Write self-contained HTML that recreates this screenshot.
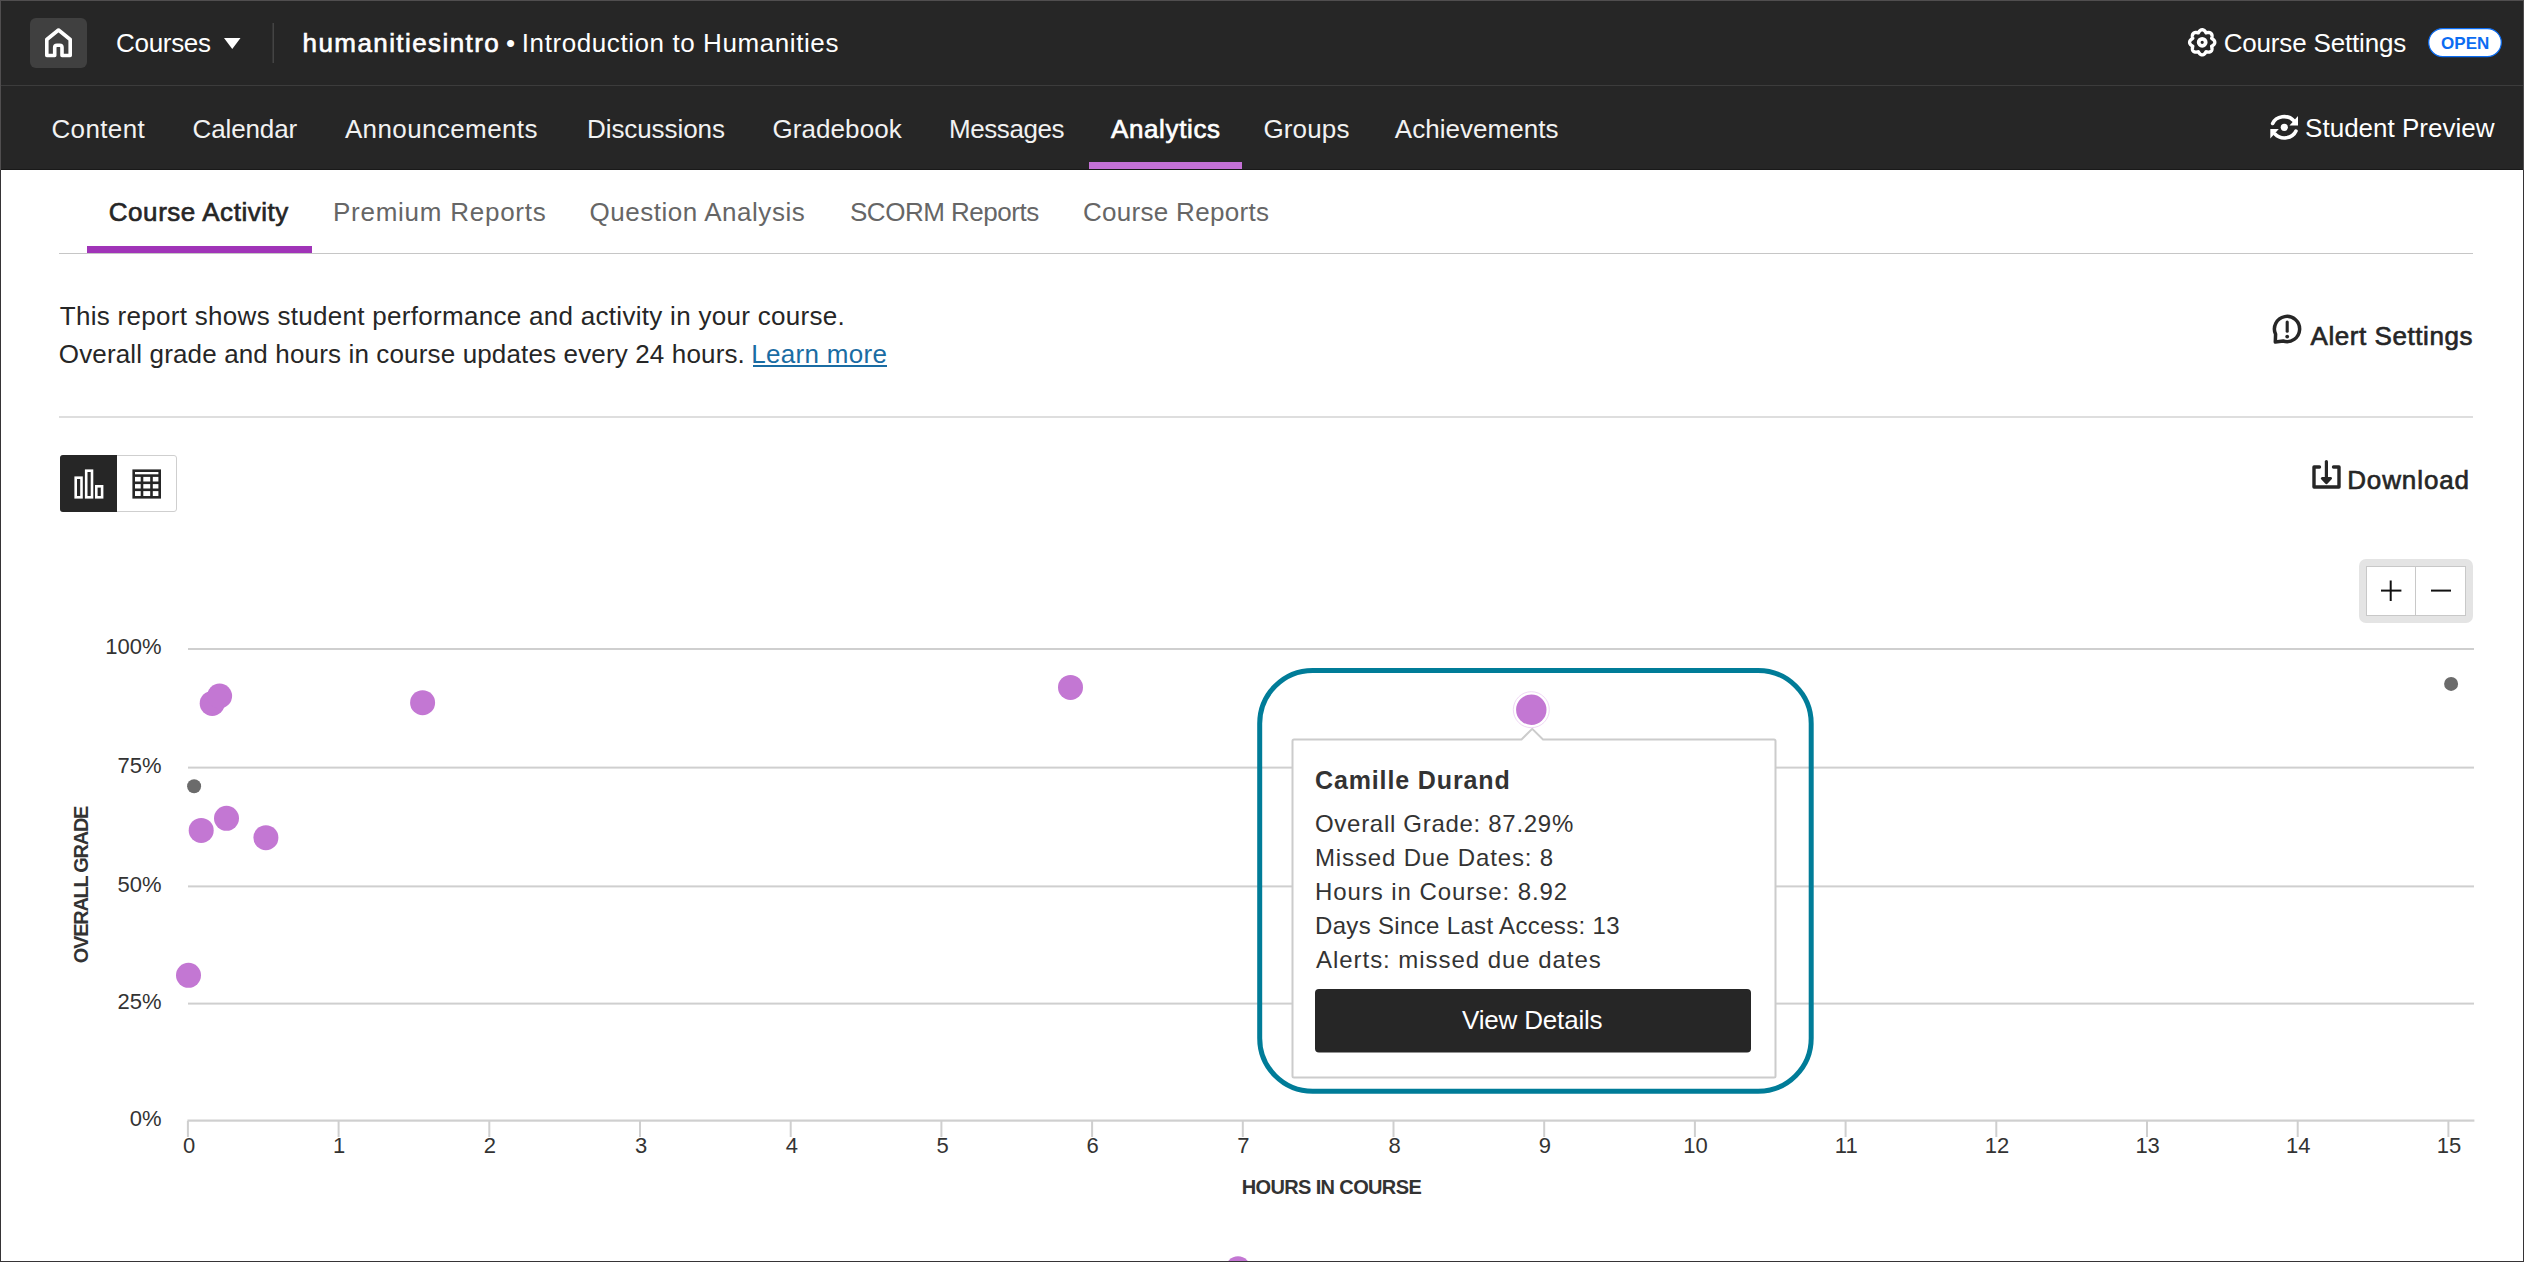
<!DOCTYPE html>
<html><head><meta charset="utf-8">
<style>
html,body{margin:0;padding:0;}
body{width:2524px;height:1262px;overflow:hidden;background:#fff;position:relative;font-family:"Liberation Sans",sans-serif;}
.a{position:absolute;}
.t{position:absolute;white-space:pre;font-family:"Liberation Sans",sans-serif;}
</style></head><body>
<!-- header -->
<div class="a" style="left:0;top:0;width:2524px;height:170px;background:#262626"></div>
<div class="a" style="left:0;top:85px;width:2524px;height:1px;background:#3c3c3c"></div>
<div class="a" style="left:0;top:169px;width:2524px;height:1px;background:#191919"></div>
<!-- home button -->
<div class="a" style="left:30px;top:18px;width:57px;height:50px;border-radius:6px;background:#404040"></div>
<svg class="a" style="left:0;top:0" width="2524" height="170" viewBox="0 0 2524 170">
  <!-- house -->
  <path d="M46.8 55.5 V39.5 L58.5 30 L70.2 39.5 V55.5 H62 V47.6 Q62 45.3 59.8 45.3 H57 Q54.7 45.3 54.7 47.6 V55.5 Z" fill="none" stroke="#fff" stroke-width="3.6" stroke-linejoin="round"/>
  <!-- triangle -->
  <path d="M224 38 H240.5 L232.25 49 Z" fill="#fff"/>
  <!-- separator -->
  <rect x="272.5" y="23" width="1.5" height="40" fill="#444"/>
  <!-- gear -->
  <g transform="translate(2202.2,42.3)">
    <path d="M0.00 -12.55 L0.33 -12.53 L0.65 -12.48 L0.97 -12.39 L1.29 -12.26 L1.59 -12.10 L1.89 -11.91 L2.17 -11.70 L2.43 -11.45 L2.69 -11.19 L2.92 -10.91 L3.15 -10.62 L3.35 -10.31 L3.54 -10.01 L3.73 -9.71 L3.90 -9.42 L4.23 -9.50 L4.57 -9.58 L4.92 -9.66 L5.28 -9.73 L5.65 -9.78 L6.01 -9.81 L6.38 -9.82 L6.74 -9.80 L7.09 -9.76 L7.43 -9.68 L7.76 -9.58 L8.07 -9.45 L8.36 -9.28 L8.63 -9.09 L8.87 -8.87 L9.09 -8.63 L9.28 -8.36 L9.45 -8.07 L9.58 -7.76 L9.68 -7.43 L9.76 -7.09 L9.80 -6.74 L9.82 -6.38 L9.81 -6.01 L9.78 -5.65 L9.73 -5.28 L9.66 -4.92 L9.58 -4.57 L9.50 -4.23 L9.42 -3.90 L9.71 -3.73 L10.01 -3.54 L10.31 -3.35 L10.62 -3.15 L10.91 -2.92 L11.19 -2.69 L11.45 -2.43 L11.70 -2.17 L11.91 -1.89 L12.10 -1.59 L12.26 -1.29 L12.39 -0.97 L12.48 -0.65 L12.53 -0.33 L12.55 -0.00 L12.53 0.33 L12.48 0.65 L12.39 0.97 L12.26 1.29 L12.10 1.59 L11.91 1.89 L11.70 2.17 L11.45 2.43 L11.19 2.69 L10.91 2.92 L10.62 3.15 L10.31 3.35 L10.01 3.54 L9.71 3.73 L9.42 3.90 L9.50 4.23 L9.58 4.57 L9.66 4.92 L9.73 5.28 L9.78 5.65 L9.81 6.01 L9.82 6.38 L9.80 6.74 L9.76 7.09 L9.68 7.43 L9.58 7.76 L9.45 8.07 L9.28 8.36 L9.09 8.63 L8.87 8.87 L8.63 9.09 L8.36 9.28 L8.07 9.45 L7.76 9.58 L7.43 9.68 L7.09 9.76 L6.74 9.80 L6.38 9.82 L6.01 9.81 L5.65 9.78 L5.28 9.73 L4.92 9.66 L4.57 9.58 L4.23 9.50 L3.90 9.42 L3.73 9.71 L3.54 10.01 L3.35 10.31 L3.15 10.62 L2.92 10.91 L2.69 11.19 L2.43 11.45 L2.17 11.70 L1.89 11.91 L1.59 12.10 L1.29 12.26 L0.97 12.39 L0.65 12.48 L0.33 12.53 L0.00 12.55 L-0.33 12.53 L-0.65 12.48 L-0.97 12.39 L-1.29 12.26 L-1.59 12.10 L-1.89 11.91 L-2.17 11.70 L-2.43 11.45 L-2.69 11.19 L-2.92 10.91 L-3.15 10.62 L-3.35 10.31 L-3.54 10.01 L-3.73 9.71 L-3.90 9.42 L-4.23 9.50 L-4.57 9.58 L-4.92 9.66 L-5.28 9.73 L-5.65 9.78 L-6.01 9.81 L-6.38 9.82 L-6.74 9.80 L-7.09 9.76 L-7.43 9.68 L-7.76 9.58 L-8.07 9.45 L-8.36 9.28 L-8.63 9.09 L-8.87 8.87 L-9.09 8.63 L-9.28 8.36 L-9.45 8.07 L-9.58 7.76 L-9.68 7.43 L-9.76 7.09 L-9.80 6.74 L-9.82 6.38 L-9.81 6.01 L-9.78 5.65 L-9.73 5.28 L-9.66 4.92 L-9.58 4.57 L-9.50 4.23 L-9.42 3.90 L-9.71 3.73 L-10.01 3.54 L-10.31 3.35 L-10.62 3.15 L-10.91 2.92 L-11.19 2.69 L-11.45 2.43 L-11.70 2.17 L-11.91 1.89 L-12.10 1.59 L-12.26 1.29 L-12.39 0.97 L-12.48 0.65 L-12.53 0.33 L-12.55 0.00 L-12.53 -0.33 L-12.48 -0.65 L-12.39 -0.97 L-12.26 -1.29 L-12.10 -1.59 L-11.91 -1.89 L-11.70 -2.17 L-11.45 -2.43 L-11.19 -2.69 L-10.91 -2.92 L-10.62 -3.15 L-10.31 -3.35 L-10.01 -3.54 L-9.71 -3.73 L-9.42 -3.90 L-9.50 -4.23 L-9.58 -4.57 L-9.66 -4.92 L-9.73 -5.28 L-9.78 -5.65 L-9.81 -6.01 L-9.82 -6.38 L-9.80 -6.74 L-9.76 -7.09 L-9.68 -7.43 L-9.58 -7.76 L-9.45 -8.07 L-9.28 -8.36 L-9.09 -8.63 L-8.87 -8.87 L-8.63 -9.09 L-8.36 -9.28 L-8.07 -9.45 L-7.76 -9.58 L-7.43 -9.68 L-7.09 -9.76 L-6.74 -9.80 L-6.38 -9.82 L-6.01 -9.81 L-5.65 -9.78 L-5.28 -9.73 L-4.92 -9.66 L-4.57 -9.58 L-4.23 -9.50 L-3.90 -9.42 L-3.73 -9.71 L-3.54 -10.01 L-3.35 -10.31 L-3.15 -10.62 L-2.92 -10.91 L-2.69 -11.19 L-2.43 -11.45 L-2.17 -11.70 L-1.89 -11.91 L-1.59 -12.10 L-1.29 -12.26 L-0.97 -12.39 L-0.65 -12.48 L-0.33 -12.53 Z" fill="none" stroke="#fff" stroke-width="3.4" stroke-linejoin="round"/>
    <circle cx="0" cy="0" r="3.5" fill="none" stroke="#fff" stroke-width="3.8"/>
  </g>
  <!-- OPEN pill -->
  <rect x="2428.7" y="28.6" width="72.6" height="28" rx="14" fill="#fff" stroke="#0b6cf2" stroke-width="1.2"/>
  <!-- refresh icon -->
  <g fill="none" stroke="#fff" stroke-width="3.6" stroke-linecap="round">
    <path d="M2272.65 123.5 A12.4 11 0 0 1 2293.6 120.5"/>
    <path d="M2295.95 131.06 A12.4 11 0 0 1 2275 134.1"/>
  </g>
  <path d="M2289.5 125.6 H2298 V116 Z" fill="#fff"/>
  <path d="M2270.3 129.1 H2278.8 L2270.3 138.6 Z" fill="#fff"/>
  <circle cx="2284.3" cy="127.3" r="3.6" fill="#fff"/>
  <!-- analytics underline -->
  <rect x="1089" y="162" width="153" height="7" fill="#c471d6"/>
</svg>
<!-- subtabs -->
<div class="a" style="left:59px;top:253px;width:2414px;height:1px;background:#c6c6c6"></div>
<div class="a" style="left:87px;top:246px;width:225px;height:7px;background:#a034b8"></div>
<div class="a" style="left:752.5px;top:365px;width:134.5px;height:2px;background:#1a6ca3"></div>
<!-- divider -->
<div class="a" style="left:59px;top:416px;width:2414px;height:2px;background:#dedede"></div>
<!-- toggle -->
<div class="a" style="left:59.5px;top:454.5px;width:117px;height:57.5px;border:1px solid #cfcfcf;border-radius:3px;box-sizing:border-box;background:#fff"></div>
<div class="a" style="left:59.5px;top:454.5px;width:57.5px;height:57.5px;border-radius:3px 0 0 3px;background:#262626"></div>
<svg class="a" style="left:0;top:440px" width="300" height="80" viewBox="0 440 300 80">
  <g fill="none" stroke="#fff" stroke-width="2.6">
    <rect x="75.7" y="477.7" width="5.8" height="19.6"/>
    <rect x="86.2" y="470.7" width="5.8" height="26.6"/>
    <rect x="96.3" y="486.3" width="5.8" height="11"/>
  </g>
  <g fill="none" stroke="#262626" stroke-width="2.6">
    <rect x="133.7" y="470.7" width="26" height="26.6"/>
    <line x1="133.7" y1="475.6" x2="159.7" y2="475.6"/>
    <line x1="133.7" y1="482.8" x2="159.7" y2="482.8"/>
    <line x1="133.7" y1="489.8" x2="159.7" y2="489.8"/>
    <line x1="142" y1="475.6" x2="142" y2="497.3"/>
    <line x1="151.5" y1="475.6" x2="151.5" y2="497.3"/>
  </g>
</svg>
<!-- alert + download icons -->
<svg class="a" style="left:2260px;top:300px" width="120" height="200" viewBox="2260 300 120 200">
  <path d="M2275.3 342 L2275.6 334.3 A12.6 12.6 0 1 1 2283.2 341 Z" fill="none" stroke="#262626" stroke-width="3.5" stroke-linejoin="round"/>
  <line x1="2287.2" y1="322" x2="2287.2" y2="331.2" stroke="#262626" stroke-width="3.1" stroke-linecap="round"/>
  <circle cx="2287.2" cy="336.6" r="1.9" fill="#262626"/>
  <path d="M2319.5 467 H2314 V487 H2339 V467 H2333.5" fill="none" stroke="#262626" stroke-width="3.4" stroke-linecap="round" stroke-linejoin="round"/>
  <line x1="2326.4" y1="461.6" x2="2326.4" y2="479" stroke="#262626" stroke-width="3.2" stroke-linecap="round"/>
  <path d="M2322.2 478.4 H2330.6 L2326.4 482.8 Z" fill="#262626" stroke="#262626" stroke-width="2.8" stroke-linejoin="round"/>
</svg>
<!-- zoom controls -->
<div class="a" style="left:2359px;top:559px;width:114px;height:64px;border-radius:7px;background:#e4e4e4"></div>
<div class="a" style="left:2366px;top:566px;width:100px;height:50px;background:#fff;border:1px solid #c8c8c8;box-sizing:border-box"></div>
<div class="a" style="left:2415px;top:566px;width:1px;height:50px;background:#c8c8c8"></div>
<svg class="a" style="left:2360px;top:570px" width="110" height="45" viewBox="2360 570 110 45">
  <g stroke="#111" stroke-width="2">
    <line x1="2381" y1="590.6" x2="2401.4" y2="590.6"/>
    <line x1="2390.7" y1="580.5" x2="2390.7" y2="601"/>
    <line x1="2431" y1="590.6" x2="2451" y2="590.6"/>
  </g>
</svg>
<!-- chart -->
<svg class="a" style="left:0;top:600px" width="2524" height="662" viewBox="0 600 2524 662">
  <g fill="#cfcfcf">
    <rect x="188" y="648" width="2286" height="2"/>
    <rect x="188" y="766.6" width="2286" height="2"/>
    <rect x="188" y="885.4" width="2286" height="2"/>
    <rect x="188" y="1002.6" width="2286" height="2"/>
    <rect x="187.4" y="1119.5" width="2287" height="2.2"/>
  </g>
  <g fill="#cfcfcf"><rect x="186.90" y="1121" width="2" height="16"/><rect x="337.60" y="1121" width="2" height="16"/><rect x="488.30" y="1121" width="2" height="16"/><rect x="639.00" y="1121" width="2" height="16"/><rect x="789.70" y="1121" width="2" height="16"/><rect x="940.40" y="1121" width="2" height="16"/><rect x="1091.10" y="1121" width="2" height="16"/><rect x="1241.80" y="1121" width="2" height="16"/><rect x="1392.50" y="1121" width="2" height="16"/><rect x="1543.20" y="1121" width="2" height="16"/><rect x="1693.90" y="1121" width="2" height="16"/><rect x="1844.60" y="1121" width="2" height="16"/><rect x="1995.30" y="1121" width="2" height="16"/><rect x="2146.00" y="1121" width="2" height="16"/><rect x="2296.70" y="1121" width="2" height="16"/><rect x="2447.40" y="1121" width="2" height="16"/></g>
  <!-- dots -->
  <g fill="#c377d3">
    <circle cx="188.5" cy="975.3" r="12.5"/>
    <circle cx="212.2" cy="703.4" r="12.5"/>
    <circle cx="219.6" cy="696" r="12.5"/>
    <circle cx="422.6" cy="702.7" r="12.5"/>
    <circle cx="1070.5" cy="687.4" r="12.5"/>
    <circle cx="201.2" cy="830.4" r="12.5"/>
    <circle cx="226.5" cy="818.3" r="12.5"/>
    <circle cx="265.9" cy="837.7" r="12.5"/>
    <circle cx="1238" cy="1268.8" r="12.5"/>
  </g>
  <g fill="#6b6b6b">
    <circle cx="194.1" cy="786.2" r="7"/>
    <circle cx="2451.1" cy="683.9" r="7"/>
  </g>
  <!-- tooltip -->
  <path d="M1294 739.5 H1521.5 L1532.2 728.8 L1543 739.5 H1774 Q1775.5 739.5 1775.5 741 V1076 Q1775.5 1077.5 1774 1077.5 H1294 Q1292.5 1077.5 1292.5 1076 V741 Q1292.5 739.5 1294 739.5 Z" fill="#fff" stroke="#cccccc" stroke-width="2"/>
  <rect x="1315" y="989" width="436" height="63.6" rx="4" fill="#262626"/>
  <!-- hovered dot -->
  <circle cx="1531.3" cy="709.7" r="18" fill="#fff" stroke="#f0d8f5" stroke-width="1"/>
  <circle cx="1531.3" cy="709.7" r="15.2" fill="#c377d3"/>
  <!-- teal focus ring -->
  <rect x="1259.7" y="670.5" width="551.5" height="420.7" rx="53" fill="none" stroke="#007c98" stroke-width="5"/>
</svg>
<!-- y axis title -->
<div class="t" style="left:81px;top:884.5px;font-size:20px;line-height:20px;font-weight:700;color:#333;transform:translate(-50%,-50%) rotate(-90deg);letter-spacing:-1.28px" id="ytitle">OVERALL GRADE</div>
<div class="t" style="left:116.00px;top:29.70px;font-size:26px;line-height:26px;font-weight:400;color:#fff;letter-spacing:-0.302px;">Courses</div>
<div class="t" style="left:302.60px;top:30.10px;font-size:26px;line-height:26px;font-weight:400;color:#fff;letter-spacing:1.411px;-webkit-text-stroke:0.65px #fff;">humanitiesintro</div>
<div class="t" style="left:506.00px;top:30.10px;font-size:26px;line-height:26px;font-weight:400;color:#fff;letter-spacing:0.000px;">•</div>
<div class="t" style="left:521.80px;top:30.10px;font-size:26px;line-height:26px;font-weight:400;color:#fff;letter-spacing:0.582px;">Introduction to Humanities</div>
<div class="t" style="left:2223.70px;top:30.00px;font-size:26px;line-height:26px;font-weight:400;color:#fff;letter-spacing:-0.177px;">Course Settings</div>
<div class="t" style="left:2441.00px;top:34.90px;font-size:17px;line-height:17px;font-weight:700;color:#0b6cf2;letter-spacing:0.033px;">OPEN</div>
<div class="t" style="left:51.40px;top:116.10px;font-size:26px;line-height:26px;font-weight:400;color:#f2f2f2;letter-spacing:0.377px;">Content</div>
<div class="t" style="left:192.50px;top:116.10px;font-size:26px;line-height:26px;font-weight:400;color:#f2f2f2;letter-spacing:-0.122px;">Calendar</div>
<div class="t" style="left:344.90px;top:116.10px;font-size:26px;line-height:26px;font-weight:400;color:#f2f2f2;letter-spacing:0.391px;">Announcements</div>
<div class="t" style="left:587.00px;top:116.10px;font-size:26px;line-height:26px;font-weight:400;color:#f2f2f2;letter-spacing:-0.081px;">Discussions</div>
<div class="t" style="left:772.50px;top:116.10px;font-size:26px;line-height:26px;font-weight:400;color:#f2f2f2;letter-spacing:0.070px;">Gradebook</div>
<div class="t" style="left:949.10px;top:116.10px;font-size:26px;line-height:26px;font-weight:400;color:#f2f2f2;letter-spacing:-0.457px;">Messages</div>
<div class="t" style="left:1110.90px;top:116.10px;font-size:26px;line-height:26px;font-weight:400;color:#fff;letter-spacing:0.645px;-webkit-text-stroke:0.65px #fff;">Analytics</div>
<div class="t" style="left:1263.40px;top:116.10px;font-size:26px;line-height:26px;font-weight:400;color:#f2f2f2;letter-spacing:0.168px;">Groups</div>
<div class="t" style="left:1394.80px;top:116.10px;font-size:26px;line-height:26px;font-weight:400;color:#f2f2f2;letter-spacing:0.027px;">Achievements</div>
<div class="t" style="left:2305.10px;top:114.90px;font-size:26px;line-height:26px;font-weight:400;color:#fff;letter-spacing:0.004px;">Student Preview</div>
<div class="t" style="left:108.80px;top:199.30px;font-size:26px;line-height:26px;font-weight:400;color:#262626;letter-spacing:0.544px;-webkit-text-stroke:0.65px #262626;">Course Activity</div>
<div class="t" style="left:333.00px;top:199.30px;font-size:26px;line-height:26px;font-weight:400;color:#666;letter-spacing:0.745px;">Premium Reports</div>
<div class="t" style="left:589.50px;top:199.30px;font-size:26px;line-height:26px;font-weight:400;color:#666;letter-spacing:0.537px;">Question Analysis</div>
<div class="t" style="left:850.00px;top:199.30px;font-size:26px;line-height:26px;font-weight:400;color:#666;letter-spacing:-0.487px;">SCORM Reports</div>
<div class="t" style="left:1083.00px;top:199.30px;font-size:26px;line-height:26px;font-weight:400;color:#666;letter-spacing:0.294px;">Course Reports</div>
<div class="t" style="left:59.80px;top:303.00px;font-size:26px;line-height:26px;font-weight:400;color:#262626;letter-spacing:0.293px;">This report shows student performance and activity in your course.</div>
<div class="t" style="left:58.80px;top:340.70px;font-size:26px;line-height:26px;font-weight:400;color:#262626;letter-spacing:0.146px;">Overall grade and hours in course updates every 24 hours.</div>
<div class="t" style="left:751.30px;top:340.70px;font-size:26px;line-height:26px;font-weight:400;color:#1a6ca3;letter-spacing:0.300px;">Learn more</div>
<div class="t" style="left:2310.50px;top:323.10px;font-size:26px;line-height:26px;font-weight:400;color:#262626;letter-spacing:0.567px;-webkit-text-stroke:0.65px #262626;">Alert Settings</div>
<div class="t" style="left:2347.20px;top:466.90px;font-size:26px;line-height:26px;font-weight:400;color:#262626;letter-spacing:0.890px;-webkit-text-stroke:0.65px #262626;">Download</div>
<div class="t" style="left:105.29px;top:636.40px;font-size:22px;line-height:22px;font-weight:400;color:#333;letter-spacing:0.000px;">100%</div>
<div class="t" style="left:117.53px;top:755.10px;font-size:22px;line-height:22px;font-weight:400;color:#333;letter-spacing:0.000px;">75%</div>
<div class="t" style="left:117.53px;top:873.90px;font-size:22px;line-height:22px;font-weight:400;color:#333;letter-spacing:0.000px;">50%</div>
<div class="t" style="left:117.53px;top:991.10px;font-size:22px;line-height:22px;font-weight:400;color:#333;letter-spacing:0.000px;">25%</div>
<div class="t" style="left:129.76px;top:1108.20px;font-size:22px;line-height:22px;font-weight:400;color:#333;letter-spacing:0.000px;">0%</div>
<div class="t" style="left:182.90px;top:1135.20px;font-size:22px;line-height:22px;font-weight:400;color:#333;letter-spacing:0.000px;">0</div>
<div class="t" style="left:333.10px;top:1135.20px;font-size:22px;line-height:22px;font-weight:400;color:#333;letter-spacing:0.000px;">1</div>
<div class="t" style="left:483.80px;top:1135.20px;font-size:22px;line-height:22px;font-weight:400;color:#333;letter-spacing:0.000px;">2</div>
<div class="t" style="left:635.00px;top:1135.20px;font-size:22px;line-height:22px;font-weight:400;color:#333;letter-spacing:0.000px;">3</div>
<div class="t" style="left:785.70px;top:1135.20px;font-size:22px;line-height:22px;font-weight:400;color:#333;letter-spacing:0.000px;">4</div>
<div class="t" style="left:936.40px;top:1135.20px;font-size:22px;line-height:22px;font-weight:400;color:#333;letter-spacing:0.000px;">5</div>
<div class="t" style="left:1086.60px;top:1135.20px;font-size:22px;line-height:22px;font-weight:400;color:#333;letter-spacing:0.000px;">6</div>
<div class="t" style="left:1237.30px;top:1135.20px;font-size:22px;line-height:22px;font-weight:400;color:#333;letter-spacing:0.000px;">7</div>
<div class="t" style="left:1388.50px;top:1135.20px;font-size:22px;line-height:22px;font-weight:400;color:#333;letter-spacing:0.000px;">8</div>
<div class="t" style="left:1538.70px;top:1135.20px;font-size:22px;line-height:22px;font-weight:400;color:#333;letter-spacing:0.000px;">9</div>
<div class="t" style="left:1683.28px;top:1135.20px;font-size:22px;line-height:22px;font-weight:400;color:#333;letter-spacing:0.000px;">10</div>
<div class="t" style="left:1834.80px;top:1135.20px;font-size:22px;line-height:22px;font-weight:400;color:#333;letter-spacing:0.000px;">11</div>
<div class="t" style="left:1984.68px;top:1135.20px;font-size:22px;line-height:22px;font-weight:400;color:#333;letter-spacing:0.000px;">12</div>
<div class="t" style="left:2135.38px;top:1135.20px;font-size:22px;line-height:22px;font-weight:400;color:#333;letter-spacing:0.000px;">13</div>
<div class="t" style="left:2286.08px;top:1135.20px;font-size:22px;line-height:22px;font-weight:400;color:#333;letter-spacing:0.000px;">14</div>
<div class="t" style="left:2436.78px;top:1135.20px;font-size:22px;line-height:22px;font-weight:400;color:#333;letter-spacing:0.000px;">15</div>
<div class="t" style="left:1241.70px;top:1177.10px;font-size:20px;line-height:20px;font-weight:700;color:#333;letter-spacing:-0.633px;">HOURS IN COURSE</div>
<div class="t" style="left:1315.00px;top:768.00px;font-size:25px;line-height:25px;font-weight:700;color:#333;letter-spacing:0.869px;">Camille Durand</div>
<div class="t" style="left:1315.00px;top:812.30px;font-size:24px;line-height:24px;font-weight:400;color:#333;letter-spacing:0.706px;">Overall Grade: 87.29%</div>
<div class="t" style="left:1315.00px;top:846.30px;font-size:24px;line-height:24px;font-weight:400;color:#333;letter-spacing:0.855px;">Missed Due Dates: 8</div>
<div class="t" style="left:1315.00px;top:880.30px;font-size:24px;line-height:24px;font-weight:400;color:#333;letter-spacing:0.935px;">Hours in Course: 8.92</div>
<div class="t" style="left:1315.00px;top:914.30px;font-size:24px;line-height:24px;font-weight:400;color:#333;letter-spacing:0.335px;">Days Since Last Access: 13</div>
<div class="t" style="left:1316.00px;top:948.30px;font-size:24px;line-height:24px;font-weight:400;color:#333;letter-spacing:0.957px;">Alerts: missed due dates</div>
<div class="t" style="left:1462.00px;top:1007.30px;font-size:26px;line-height:26px;font-weight:400;color:#fff;letter-spacing:-0.180px;">View Details</div>
<!-- outer border -->
<div class="a" style="left:0;top:0;width:2524px;height:1px;background:#504e4f"></div>
<div class="a" style="left:0;top:0;width:1px;height:170px;background:#504e4f"></div>
<div class="a" style="left:0;top:170px;width:1px;height:1092px;background:#363436"></div>
<div class="a" style="left:2523px;top:0;width:1px;height:170px;background:#504e4f"></div>
<div class="a" style="left:2523px;top:170px;width:1px;height:1092px;background:#363436"></div>
<div class="a" style="left:0;top:1261px;width:2524px;height:1px;background:#363436"></div>
</body></html>
